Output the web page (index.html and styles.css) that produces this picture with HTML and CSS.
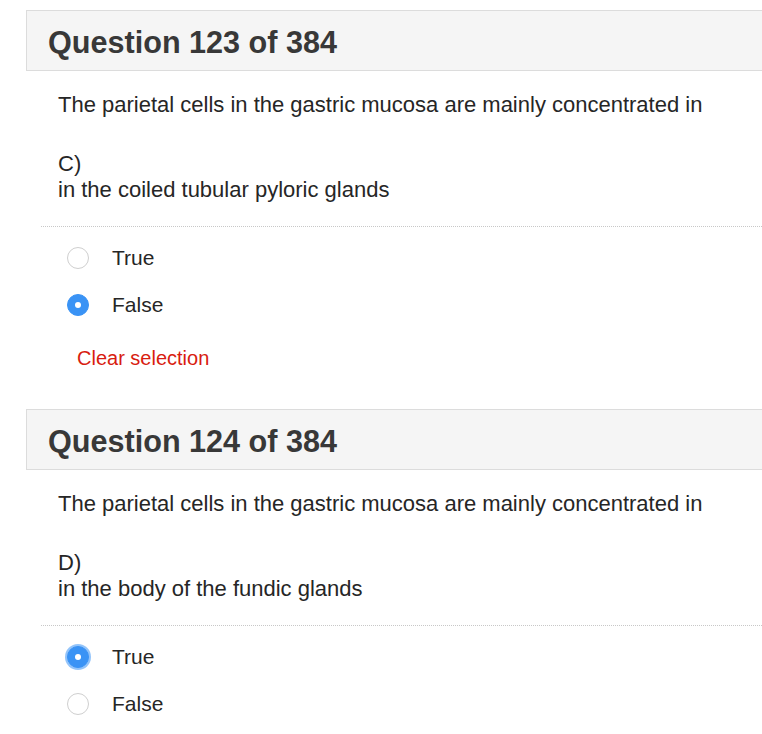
FILE: index.html
```html
<!DOCTYPE html>
<html lang="en">
<head>
<meta charset="utf-8">
<title>Quiz</title>
<link rel="stylesheet" href="styles.css">
</head>
<body>
<div class="page">
  <section class="question">
    <div class="q-head"><h2>Question 123 of 384</h2></div>
    <div class="q-body">
      <p class="stem">The parietal cells in the gastric mucosa are mainly concentrated in</p>
      <p class="option-text">C)<br>in the coiled tubular pyloric glands</p>
    </div>
    <div class="answers">
      <label class="choice"><span class="radio"></span><span class="label">True</span></label>
      <label class="choice"><span class="radio checked"></span><span class="label">False</span></label>
      <a class="clear">Clear selection</a>
    </div>
  </section>
  <section class="question">
    <div class="q-head"><h2>Question 124 of 384</h2></div>
    <div class="q-body">
      <p class="stem">The parietal cells in the gastric mucosa are mainly concentrated in</p>
      <p class="option-text">D)<br>in the body of the fundic glands</p>
    </div>
    <div class="answers">
      <label class="choice"><span class="radio checked focus"></span><span class="label">True</span></label>
      <label class="choice"><span class="radio"></span><span class="label">False</span></label>
    </div>
  </section>
</div>
</body>
</html>
```
FILE: styles.css
```css
html, body {
  margin: 0;
  padding: 0;
  background: #fff;
  overflow: hidden;
}
body {
  font-family: "Liberation Sans", Arial, Helvetica, sans-serif;
  color: #222;
}
.page {
  padding: 10px 0 0 26px;
}
.q-head {
  box-sizing: border-box;
  height: 61px;
  background: #f5f5f5;
  border: 1px solid #dcdcdc;
  border-right: 0;
  display: flex;
  align-items: center;
  padding: 4px 0 0 21px;
}
.q-head h2 {
  margin: 0;
  font-size: 30.6px;
  font-weight: bold;
  color: #383838;
  line-height: 1;
}
.q-body {
  padding: 21px 0 0 32px;
}
.q-body p {
  margin: 0;
  font-size: 22px;
  line-height: 26px;
  color: #262626;
}
.q-body .stem {
  margin-bottom: 33px;
}
.answers {
  margin: 23px 0 0 15px;
  border-top: 1px dotted #c8c8c8;
  padding-top: 19px;
  padding-bottom: 39px;
}
.question:last-child .answers {
  padding-bottom: 0;
}
.choice {
  display: flex;
  align-items: center;
  height: 24px;
  margin-bottom: 23px;
  padding-left: 26px;
}
.question:last-child .choice:last-child {
  margin-bottom: 0;
}
.radio {
  width: 20px;
  height: 20px;
  border: 1px solid #cfcfcf;
  border-radius: 50%;
  background: #fff;
  box-sizing: content-box;
  flex: none;
  position: relative;
}
.radio.checked {
  background: #3a93f5;
  border-color: #3a93f5;
}
.radio.checked::after {
  content: "";
  position: absolute;
  left: 7px;
  top: 7px;
  width: 6px;
  height: 6px;
  border-radius: 50%;
  background: #fff;
}
.radio.focus {
  box-shadow: 0 0 0 2px rgba(58, 147, 245, 0.55);
}
.label {
  margin-left: 23px;
  font-size: 21px;
  color: #262626;
}
.clear {
  display: block;
  margin: 29px 0 0 36px;
  font-size: 20px;
  line-height: 24px;
  color: #d81c10;
}
```
